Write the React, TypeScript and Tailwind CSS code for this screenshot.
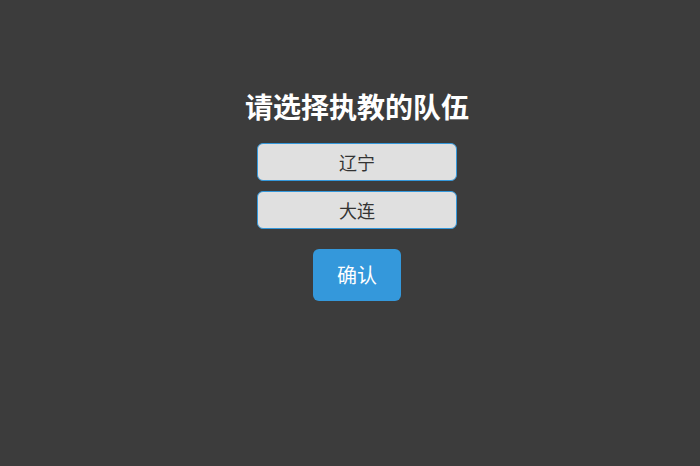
import { useState } from "react";

const teams = ["辽宁", "大连"];

export default function App() {
  const [picked, setPicked] = useState<string | null>(null);

  return (
    <div
      className="min-h-[466px] w-full bg-[#3c3c3c] flex flex-col items-center pt-[89px] pl-[14px]"
      style={{ fontFamily: '"Noto Sans CJK SC", "Noto Sans", sans-serif' }}
    >
      <h1 className="text-[28px] leading-[34px] font-bold text-white">
        请选择执教的队伍
      </h1>

      <div className="mt-5 flex flex-col gap-2.5">
        {teams.map((team) => (
          <button
            key={team}
            onClick={() => setPicked(team)}
            className="w-[200px] h-[38px] rounded-md border border-[#3498db] bg-[#e0e0e0] text-[18px] text-[#333333] flex items-center justify-center"
          >
            {team}
          </button>
        ))}
      </div>

      <button className="mt-5 h-[52px] px-6 rounded-md bg-[#3498db] text-white text-[20px] leading-6">
        确认
      </button>
      {picked && <span className="hidden">{picked}</span>}
    </div>
  );
}
